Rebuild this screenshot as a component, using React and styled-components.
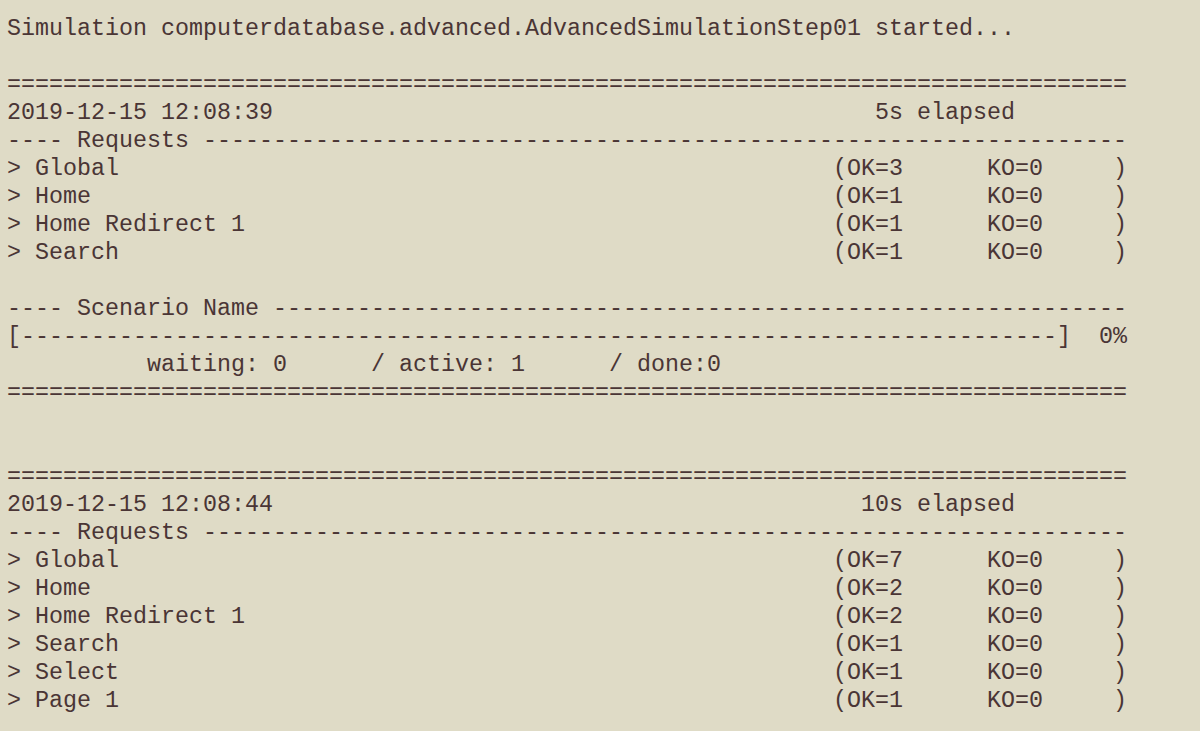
import React from 'react';
import styled, { createGlobalStyle } from 'styled-components';

const COLS = 80;

const GlobalStyle = createGlobalStyle`
  html, body {
    margin: 0;
    padding: 0;
    background: #dfdbc6;
  }
  body { overflow: hidden; }
`;

const Terminal = styled.main`
  height: 100vh;
  overflow: hidden;
  box-sizing: border-box;
  padding: 15px 7px 0;
  background: #dfdbc6;
  color: #4a3535;
  font-family: "Liberation Mono", "DejaVu Sans Mono", monospace;
  font-size: 23.333px;
  line-height: 28px;
`;

const Line = styled.div`
  height: 28px;
  white-space: pre;
`;

const Blank = styled.div`
  height: ${(p) => p.$lines * 28}px;
`;

const Block = styled.section`
  display: flex;
  flex-direction: column;
`;

const TimeRow = styled.div`
  width: 72ch;
  height: 28px;
  display: flex;
  justify-content: space-between;
  white-space: pre;
`;

const RequestRow = styled.div`
  height: 28px;
  display: grid;
  grid-template-columns: 59ch 11ch 9ch 1ch;
  white-space: pre;
`;

const UsersRow = styled.div`
  height: 28px;
  display: grid;
  grid-template-columns: 10ch 16ch 17ch auto;
  white-space: pre;
`;

const Cell = styled.span`
  white-space: pre;
`;

const Rule = () => <Line>{'='.repeat(COLS)}</Line>;

const SectionTitle = ({ title }) => (
  <Line>{`---- ${title} `.padEnd(COLS, '-')}</Line>
);

const Request = ({ name, ok, ko }) => (
  <RequestRow>
    <Cell>{`> ${name}`}</Cell>
    <Cell>{`(OK=${ok}`}</Cell>
    <Cell>{`KO=${ko}`}</Cell>
    <Cell>)</Cell>
  </RequestRow>
);

const Progress = ({ pct }) => (
  <Line>{`[${'-'.repeat(74)}]${String(pct).padStart(3, ' ')}%`}</Line>
);

const Users = ({ waiting, active, done }) => (
  <UsersRow>
    <Cell />
    <Cell>{`waiting: ${waiting}`}</Cell>
    <Cell>{`/ active: ${active}`}</Cell>
    <Cell>{`/ done:${done}`}</Cell>
  </UsersRow>
);

const reports = [
  {
    time: '2019-12-15 12:08:39',
    elapsed: '5s',
    requests: [
      { name: 'Global', ok: 3, ko: 0 },
      { name: 'Home', ok: 1, ko: 0 },
      { name: 'Home Redirect 1', ok: 1, ko: 0 },
      { name: 'Search', ok: 1, ko: 0 },
    ],
    scenario: { name: 'Scenario Name', pct: 0, waiting: 0, active: 1, done: 0 },
  },
  {
    time: '2019-12-15 12:08:44',
    elapsed: '10s',
    requests: [
      { name: 'Global', ok: 7, ko: 0 },
      { name: 'Home', ok: 2, ko: 0 },
      { name: 'Home Redirect 1', ok: 2, ko: 0 },
      { name: 'Search', ok: 1, ko: 0 },
      { name: 'Select', ok: 1, ko: 0 },
      { name: 'Page 1', ok: 1, ko: 0 },
    ],
  },
];

const Report = ({ report }) => (
  <Block>
    <Rule />
    <TimeRow>
      <Cell>{report.time}</Cell>
      <Cell>{`${report.elapsed} elapsed`}</Cell>
    </TimeRow>
    <SectionTitle title="Requests" />
    {report.requests.map((r) => (
      <Request key={r.name} {...r} />
    ))}
    {report.scenario && (
      <>
        <Blank $lines={1} />
        <SectionTitle title={report.scenario.name} />
        <Progress pct={report.scenario.pct} />
        <Users
          waiting={report.scenario.waiting}
          active={report.scenario.active}
          done={report.scenario.done}
        />
        <Rule />
      </>
    )}
  </Block>
);

export default function App() {
  return (
    <>
      <GlobalStyle />
      <Terminal>
        <Line>Simulation computerdatabase.advanced.AdvancedSimulationStep01 started...</Line>
        <Blank $lines={1} />
        <Report report={reports[0]} />
        <Blank $lines={2} />
        <Report report={reports[1]} />
      </Terminal>
    </>
  );
}
